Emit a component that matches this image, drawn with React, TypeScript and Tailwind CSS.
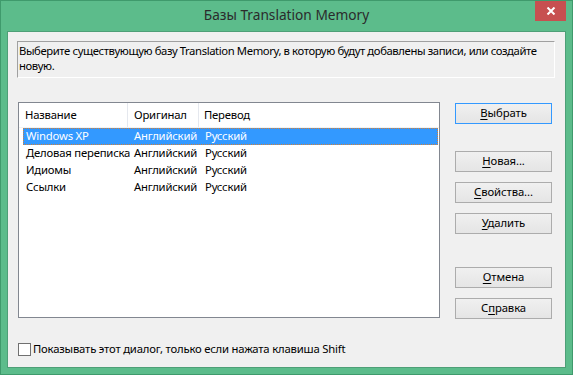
import React from "react";

const rows = [
  ["Windows XP", "Английский", "Русский"],
  ["Деловая переписка", "Английский", "Русский"],
  ["Идиомы", "Английский", "Русский"],
  ["Ссылки", "Английский", "Русский"],
];

function Btn({ pre, u, post, def, className = "" }: { pre?: string; u: string; post: string; def?: boolean; className?: string }) {
  return (
    <div
      className={
        "w-[97px] h-[21px] flex items-center justify-center text-[11.3px] tracking-[-0.1px] text-[#000] bg-gradient-to-b from-[#f0f0f0] to-[#e5e5e5] border " +
        (def ? "border-[#3399ff]" : "border-[#acacac]") +
        " " +
        className
      }
    >
      <span>
        {pre}
        <span className="underline underline-offset-2">{u}</span>
        {post}
      </span>
    </div>
  );
}

export default function App() {
  return (
    <div
      className="w-[573px] h-[375px] bg-[#5cbc8b] border border-[#3f9a6c] flex flex-col overflow-hidden"
      style={{ fontFamily: '"Noto Sans", "Open Sans", sans-serif' }}
    >
      <div className="relative h-[30px] shrink-0">
        <div className="h-full flex items-center justify-center text-[13.7px] text-[#2b2b2b] pb-[1px]">
          Базы Translation Memory
        </div>
        <div className="absolute right-[6px] top-0 w-[31px] h-[20px] bg-[#c75050] flex items-center justify-center">
          <svg width="10" height="8" viewBox="0 0 10 8">
            <path d="M1.5 0.5 L8.5 7.5 M8.5 0.5 L1.5 7.5" stroke="#fff" strokeWidth="2" />
          </svg>
        </div>
      </div>
      <div className="flex-1 mx-[6px] mb-[6px] bg-[#f0f0f0] border border-[#4e9f77] flex flex-col pl-[9px] pt-[9px] text-[11.3px] tracking-[-0.2px] text-[#000]">
        <div className="w-[538px] h-[37px] border-t border-l border-[#a0a0a0] border-r border-b border-r-[#ffffff] border-b-[#ffffff] px-[1px] pt-[1px] leading-[15px] tracking-[-0.4px]">
          Выберите существующую базу Translation Memory, в которую будут добавлены записи, или создайте новую.
        </div>
        <div className="flex mt-[24px]">
          <div className="ml-[1px] w-[422px] h-[216px] bg-white border border-[#828790] flex flex-col">
            <div className="h-[25px] flex items-center bg-[#ffffff] border-b border-[#f2f2f2]">
              <div className="w-[109px] pl-[6px] h-full flex items-center border-r border-[#e5e8ee]">Название</div>
              <div className="w-[71px] pl-[6px] h-full flex items-center border-r border-[#e5e8ee]">Оригинал</div>
              <div className="pl-[5px] h-full flex items-center">Перевод</div>
            </div>
            <div className="flex flex-col pl-[4px] pr-[1px]">
              {rows.map((r, i) => (
                <div
                  key={i}
                  className={
                    "h-[17px] flex items-center " +
                    (i === 0 ? "bg-[#3399ff] text-white border border-dotted border-[#d0803a]" : "border border-transparent")
                  }
                >
                  <div className="w-[107px] pl-[2px] whitespace-nowrap">{r[0]}</div>
                  <div className="w-[71px] pl-[3px] whitespace-nowrap">{r[1]}</div>
                  <div className="pl-[3px] whitespace-nowrap">{r[2]}</div>
                </div>
              ))}
            </div>
          </div>
          <div className="ml-[15px] mt-[1px] flex flex-col">
            <Btn u="В" post="ыбрать" def />
            <Btn u="Н" post="овая..." className="mt-[27px]" />
            <Btn u="С" post="войства..." className="mt-[10px]" />
            <Btn u="У" post="далить" className="mt-[10px]" />
            <Btn u="О" post="тмена" className="mt-[33px]" />
            <Btn pre="С" u="п" post="равка" className="mt-[10px]" />
          </div>
        </div>
        <div className="flex items-center mt-[22px] ml-[1px]">
          <div className="w-[13px] h-[13px] bg-white border border-[#707070]" />
          <span className="ml-[2px]">Показывать этот диалог, только если нажата клавиша Shift</span>
        </div>
      </div>
    </div>
  );
}
